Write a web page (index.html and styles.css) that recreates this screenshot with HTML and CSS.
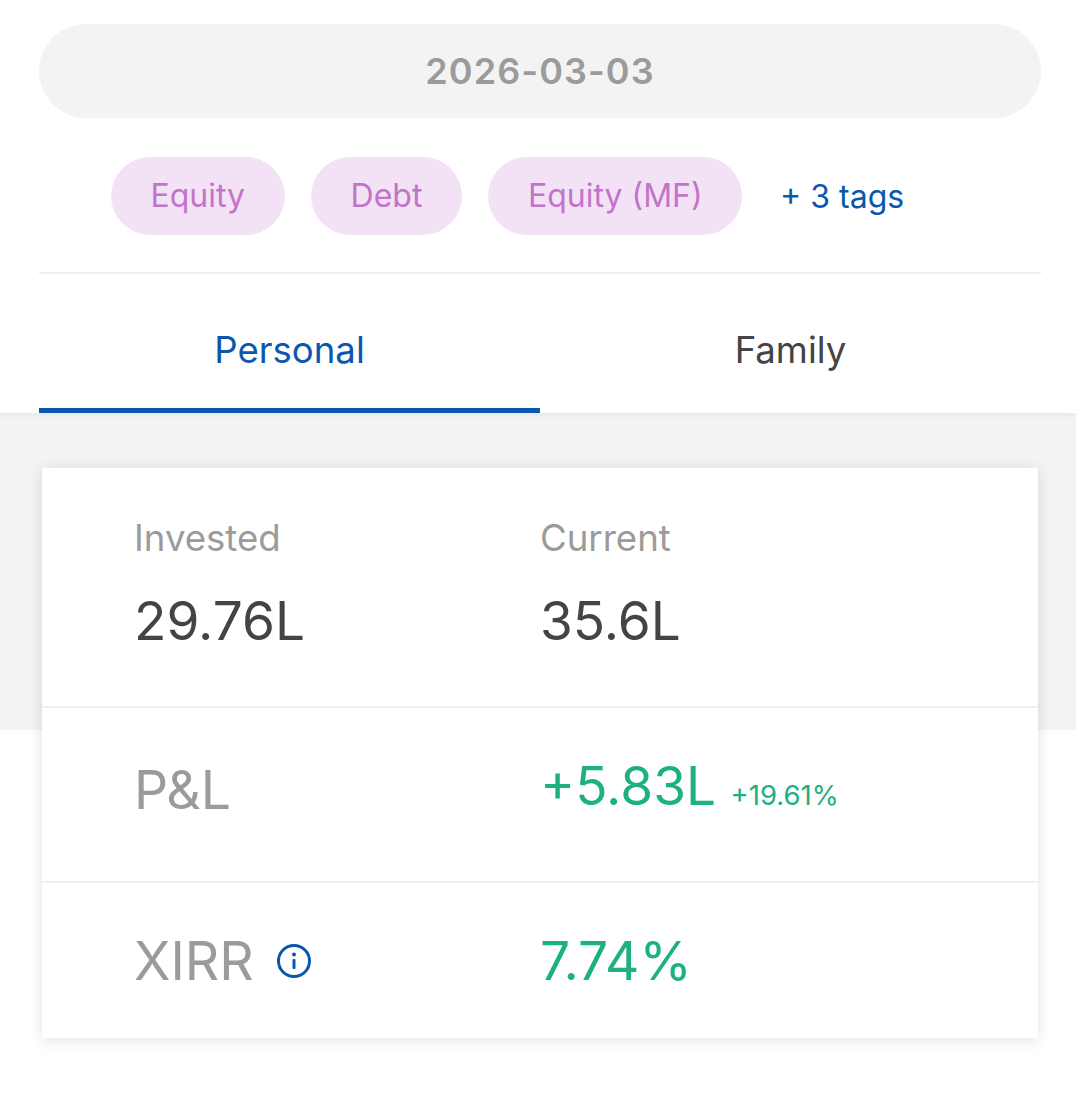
FILE: index.html
```html
<!DOCTYPE html>
<html>

<head>
    <meta charset="utf-8" />
    <title>Holdings</title>
    <link rel="stylesheet" href="styles.css">
</head>

<body>
    <div class="top">
        <div class="date_pill">2026-03-03</div>
        <div class="tags">
            <span class="tag">Equity</span>
            <span class="tag">Debt</span>
            <span class="tag">Equity (MF)</span>
            <span class="more_tags">+ 3 tags</span>
        </div>
        <div class="tabs">
            <div class="tab active">Personal</div>
            <div class="tab">Family</div>
        </div>
    </div>
    <div class="band">
        <div class="card">
            <div class="row row_amounts">
                <div class="col_left">
                    <div class="label">Invested</div>
                    <div class="amount">29.76L</div>
                </div>
                <div class="col_right">
                    <div class="label">Current</div>
                    <div class="amount">35.6L</div>
                </div>
            </div>
            <div class="row row_pnl">
                <div class="col_left big_label">P&amp;L</div>
                <div class="col_right green">
                    <span class="big_value">+5.83L</span>
                    <span class="percent">+19.61%</span>
                </div>
            </div>
            <div class="row row_xirr">
                <div class="col_left big_label">
                    XIRR
                    <svg class="info" width="36" height="36" viewBox="0 0 36 36">
                        <circle cx="18" cy="18" r="15.5" fill="none" stroke="#0b57ad" stroke-width="3" />
                        <circle cx="18" cy="11.5" r="2" fill="#0b57ad" />
                        <rect x="16.5" y="16" width="3" height="10" rx="1" fill="#0b57ad" />
                    </svg>
                </div>
                <div class="col_right green"><span class="big_value">7.74%</span></div>
            </div>
        </div>
    </div>
</body>

</html>
```
FILE: styles.css
```css
* {
    margin: 0;
    padding: 0;
    box-sizing: border-box;
}

body {
    background: #fff;
    font-family: "Inter", "Liberation Sans", sans-serif;
    color: #444;
}

.top {
    position: relative;
    padding: 24px 35px 0 39px;
    background: #fff;
    box-shadow: 0 2px 6px rgba(0, 0, 0, 0.06);
}

.date_pill {
    height: 94px;
    line-height: 94px;
    border-radius: 47px;
    background: #f3f3f3;
    color: #9b9b9b;
    font-size: 36px;
    font-weight: 600;
    letter-spacing: 1.1px;
    text-align: center;
}

.tags {
    display: flex;
    align-items: center;
    height: 156px;
    padding: 2px 0 0 72px;
    gap: 26.5px;
    border-bottom: 2px solid #f0f0f0;
}

.tag {
    height: 78px;
    line-height: 78px;
    padding: 0 39.5px;
    border-radius: 39px;
    background: #f3e2f5;
    color: #c174c9;
    font-size: 32px;
}

.more_tags {
    margin-left: 11.5px;
    color: #0b57ad;
    font-size: 32px;
}

.tabs {
    display: flex;
}

.tab {
    flex: 1;
    height: 139px;
    line-height: 152px;
    text-align: center;
    font-size: 36.6px;
    color: #444;
}

.tab.active {
    color: #0b57ad;
    border-bottom: 5px solid #0b57ad;
}

/* grey only reaches y=730, the card hangs past it */
.band {
    padding: 55px 38px 56px 42px;
    background: linear-gradient(#f3f3f3 317px, #fff 317px);
}

.card {
    height: 570px;
    background: #fff;
    box-shadow: 0 2px 14px rgba(0, 0, 0, 0.12);
}

.row {
    display: flex;
    align-items: center;
    padding-left: 92px;
    border-bottom: 2px solid #f0f0f0;
}

.row_amounts {
    height: 240px;
    padding-bottom: 5px;
}

.row_pnl {
    height: 175px;
    padding-bottom: 10px;
}

.row_pnl .col_right {
    padding-bottom: 8px;
}

.row_xirr {
    height: 155px;
    border-bottom: 0;
}

.col_left {
    width: 406px;
}

.label {
    color: #9b9b9b;
    font-size: 36.6px;
    margin-bottom: 28px;
}

.amount {
    color: #444;
    font-size: 53.2px;
}

.big_label {
    display: flex;
    align-items: center;
    gap: 22px;
    color: #9b9b9b;
    font-size: 53.5px;
}

.green {
    color: #1cb083;
}

.big_value {
    font-size: 53.2px;
}

.percent {
    font-size: 27.5px;
    margin-left: 10px;
}

.info {
    flex: none;
}
```
